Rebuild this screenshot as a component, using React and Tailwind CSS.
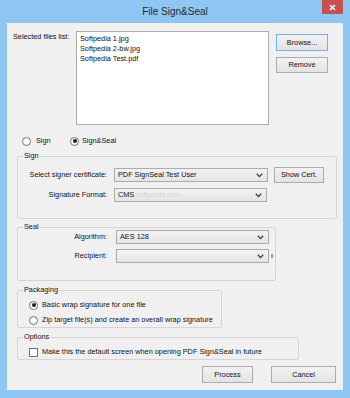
import React from "react";

const font = { fontFamily: '"Liberation Sans", Arial, sans-serif' };

function Chevron() {
  return (
    <svg width="7" height="5" viewBox="0 0 7 5" className="shrink-0">
      <path d="M0.8 0.8 L3.5 3.6 L6.2 0.8" fill="none" stroke="#3a3a3a" strokeWidth="1.3" />
    </svg>
  );
}

function Combo({ w, children }) {
  return (
    <div
      className={`${w} flex h-[14px] items-center justify-between border border-[#acacac] bg-linear-to-b from-[#f3f3f3] to-[#e4e4e4] pl-[3px] pr-[4px]`}
    >
      <div className="flex items-center whitespace-nowrap">{children}</div>
      <Chevron />
    </div>
  );
}

function Btn({ w, h = "h-[17px]", focused, children }) {
  return (
    <div
      className={`${w} ${h} flex items-center justify-center border ${
        focused ? "border-[#74aee4]" : "border-[#acacac]"
      } bg-linear-to-b from-[#f2f2f2] to-[#e3e3e3] leading-none`}
    >
      {children}
    </div>
  );
}

function Radio({ checked }) {
  return (
    <div className="flex h-[9px] w-[9px] shrink-0 items-center justify-center rounded-full border border-[#707070] bg-white">
      {checked && <div className="h-[4px] w-[4px] rounded-full bg-[#1c1c1c]" />}
    </div>
  );
}

function Group({ title, className, children }) {
  return (
    <fieldset className={`border border-[#d5d5d5] rounded-[2px] ${className}`}>
      <legend className="ml-[5px] px-[1px] leading-[6px]">{title}</legend>
      {children}
    </fieldset>
  );
}

export default function App() {
  return (
    <div
      className="flex h-[398px] w-[350px] flex-col bg-[#8ec6f4] text-[7.3px] text-[#111]"
      style={font}
    >
      {/* Title bar */}
      <div className="grid h-[23px] grid-cols-[1fr_auto_1fr] px-[7px]">
        <div />
        <div className="pt-[5px] text-[10px] leading-[13px] text-[#2b2b2b]">File Sign&amp;Seal</div>
        <div className="flex justify-end">
          <div className="flex h-[14px] w-[21px] items-center justify-center bg-[#c75050]">
            <svg width="7" height="7" viewBox="0 0 7 7">
              <path d="M1 1 L6 6 M6 1 L1 6" stroke="#fff" strokeWidth="1.6" />
            </svg>
          </div>
        </div>
      </div>

      {/* Client area */}
      <div className="mx-[7px] flex h-[367px] flex-col bg-[#f0f0f0]">
        {/* Files row */}
        <div className="flex pl-[6px] pt-[8px]">
          <div className="w-[63px] pt-[1px] leading-[10px]">Selected files list:</div>
          <div className="h-[94px] w-[193px] border border-[#abadb3] bg-white px-[3px] pt-[2px] leading-[10px]">
            <div>Softpedia 1.jpg</div>
            <div>Softpedia 2-bw.jpg</div>
            <div>Softpedia Test.pdf</div>
          </div>
          <div className="ml-[7px] flex flex-col gap-[6px] pt-[3px]">
            <Btn w="w-[52px]" focused>
              Browse...
            </Btn>
            <Btn w="w-[52px]" h="h-[16px]">
              Remove
            </Btn>
          </div>
        </div>

        {/* Radios */}
        <div className="mt-[11px] flex h-[10px] items-center pl-[15px] leading-[10px]">
          <div className="flex w-[48px] items-center gap-[5px]">
            <Radio />
            <span>Sign</span>
          </div>
          <div className="flex items-center gap-[3px]">
            <Radio checked />
            <span>Sign&amp;Seal</span>
          </div>
        </div>

        {/* Sign group */}
        <Group title="Sign" className="ml-[10px] mt-[7px] w-[320px] pb-[16px]">
          <div className="mt-[8px] flex h-[16px] items-center">
            <div className="w-[89px] text-right">Select signer certificate:</div>
            <div className="ml-[7px]">
              <Combo w="w-[154px]">PDF SignSeal Test User</Combo>
            </div>
            <div className="ml-[6px]">
              <Btn w="w-[50px]" h="h-[16px]">
                Show Cert.
              </Btn>
            </div>
          </div>
          <div className="mt-[5px] flex h-[14px] items-center">
            <div className="w-[89px] text-right">Signature Format:</div>
            <div className="ml-[7px]">
              <Combo w="w-[153px]">
                <span>CMS</span>
                <span className="ml-[1px] text-[#d6d6d6]">softpedia.com</span>
              </Combo>
            </div>
          </div>
        </Group>

        {/* Seal group */}
        <Group title="Seal" className="ml-[10px] mt-[5px] w-[259px] pb-[17px]">
          <div className="flex h-[14px] items-center">
            <div className="w-[89px] text-right">Algorithm:</div>
            <div className="ml-[9px]">
              <Combo w="w-[153px]">AES 128</Combo>
            </div>
          </div>
          <div className="mt-[5px] flex h-[14px] items-center">
            <div className="w-[89px] text-right">Recipient:</div>
            <div className="ml-[9px]">
              <Combo w="w-[153px]"></Combo>
            </div>
            <div className="ml-[2px] h-[4px] w-[2px] bg-[#e8824e]" />
          </div>
        </Group>

        {/* Packaging group */}
        <Group title="Packaging" className="ml-[10px] mt-[6px] w-[205px] pb-[2px]">
          <div className="mt-[7px] flex h-[10px] items-center gap-[4px] pl-[11px] leading-[10px]">
            <Radio checked />
            <span>Basic wrap signature for one file</span>
          </div>
          <div className="mt-[5px] flex h-[10px] items-center gap-[4px] pl-[11px] leading-[10px]">
            <Radio />
            <span>Zip target file(s) and create an overall wrap signature</span>
          </div>
        </Group>

        {/* Options group */}
        <Group title="Options" className="ml-[10px] mt-[6px] w-[282px] pb-[2px]">
          <div className="mt-[7px] flex h-[10px] items-center gap-[4px] pl-[11px] leading-[10px]">
            <div className="h-[9px] w-[9px] shrink-0 border border-[#707070] bg-white" />
            <span>Make this the default screen when opening PDF Sign&amp;Seal in future</span>
          </div>
        </Group>

        {/* Bottom buttons */}
        <div className="mt-[6px] flex justify-end gap-[18px] pr-[7px]">
          <Btn w="w-[51px]">Process</Btn>
          <Btn w="w-[65px]">Cancel</Btn>
        </div>
      </div>
    </div>
  );
}
